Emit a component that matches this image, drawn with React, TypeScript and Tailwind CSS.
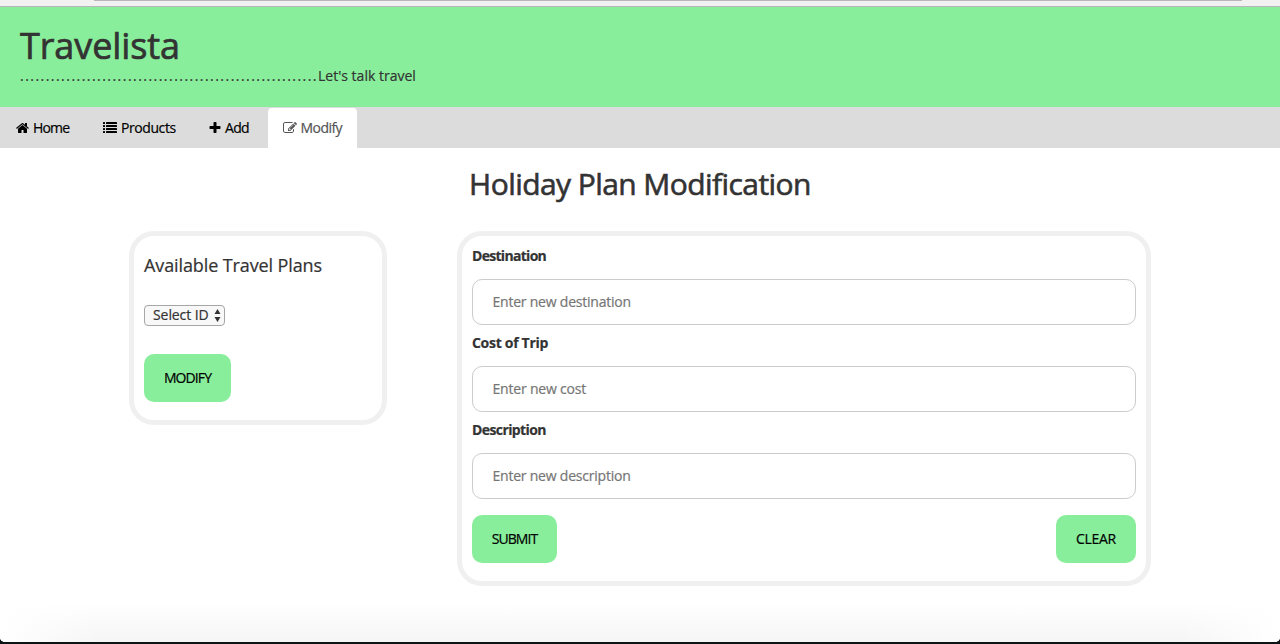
import type { ReactNode } from "react";

function Icon({ children, className }: { children: ReactNode; className: string }) {
  return (
    <svg viewBox="0 0 1792 1792" fill="currentColor" className={className} aria-hidden="true">
      {children}
    </svg>
  );
}

function Field({ label, placeholder, labelClass, inputClass }: { label: string; placeholder: string; labelClass: string; inputClass: string }) {
  return (
    <div className="h-[87px]">
      <label className={`block h-[38px] pt-[5px] text-[14px] leading-5 font-bold ${labelClass}`}>
        {label}
      </label>
      <input
        placeholder={placeholder}
        className={`block h-[46px] w-full rounded-[10px] border border-[#ccc] bg-white pr-5 pb-[2px] pl-[19.5px] text-[14px] placeholder:text-[#757575] ${inputClass}`}
      />
    </div>
  );
}

export default function App() {
  return (
    <div className="h-[644px] overflow-hidden bg-[#0b1315] font-['Open_Sans','Liberation_Sans',sans-serif] text-[14px] leading-5 text-[#333] [-webkit-text-stroke:0.2px_currentColor]">
      <div className="flex h-[642px] flex-col overflow-hidden rounded-b-[5px] bg-white">
        <div className="h-[7px] shrink-0 border-b border-[#b9b5b9] bg-[#f2f1f2]">
          <div className="mr-[38px] ml-[94px] h-px bg-[#b8b6b8]" />
        </div>
        <header className="h-[100px] shrink-0 bg-[#89ee9b] pl-5">
          <h1 className="pt-[19px] text-[36px] leading-10 font-medium [-webkit-text-stroke:0.7px_currentColor]">
            <span className="tracking-[-0.1px]">Travelista</span>
          </h1>
          <p className="flex whitespace-pre">
            <span className="tracking-[1.46px]">..........................................................</span>
            <span className="tracking-[0.01px]">Let's talk travel</span>
          </p>
        </header>
        <nav className="flex h-[41px] shrink-0 items-start bg-[#dcdcdc] pt-px text-black">
          <a className="flex h-10 w-[88px] items-center pl-[15.5px]">
            <Icon className="size-[14px]">
              <path d="M1408 992v480q0 26-19 45t-45 19h-384v-384h-256v384h-384q-26 0-45-19t-19-45v-480q0-1 .5-3t.5-3l575-474 575 474q1 2 1 6zm223-69l-62 74q-8 9-21 11h-3q-13 0-21-7l-692-577-692 577q-12 8-24 7-13-2-21-11l-62-74q-8-10-7-23.5t11-21.5l719-599q32-26 76-26t76 26l244 204v-195q0-14 9-23t23-9h192q14 0 23 9t9 23v408l219 182q10 8 11 21.5t-7 23.5z" />
            </Icon>
            <span className="ml-[3.5px] tracking-[-0.85px]">Home</span>
          </a>
          <a className="flex h-10 w-[107px] items-center pl-[15px]">
            <Icon className="size-[14px]">
              {[256, 640, 1024, 1408].map((y) => (
                <g key={y}>
                  <rect x="0" y={y - 128} width="256" height="256" rx="32" />
                  <rect x="384" y={y - 128} width="1408" height="256" rx="32" />
                </g>
              ))}
            </Icon>
            <span className="ml-1 tracking-[-0.42px]">Products</span>
          </a>
          <a className="flex h-10 w-[73px] items-center pl-[13px]">
            <Icon className="size-[14px]">
              <path d="M1600 736v192q0 40-28 68t-68 28h-416v416q0 40-28 68t-68 28h-192q-40 0-68-28t-28-68v-416h-416q-40 0-68-28t-28-68v-192q0-40 28-68t68-28h416v-416q0-40 28-68t68-28h192q40 0 68 28t28 68v416h416q40 0 68 28t28 68z" />
            </Icon>
            <span className="ml-[3px] tracking-[-0.7px]">Add</span>
          </a>
          <a className="flex h-[41px] w-[89px] items-center rounded-t-[4px] bg-white pb-px pl-[14.5px] text-[#555]">
            <Icon className="size-[14px]">
              <path d="M888 1184l116-116-152-152-116 116v56h96v96h56zm440-720q-16-16-33 1l-350 350q-17 17-1 33t33-1l350-350q17-17 1-33zm80 594v190q0 119-84.5 203.5t-203.5 84.5h-832q-119 0-203.5-84.5t-84.5-203.5v-832q0-119 84.5-203.5t203.5-84.5h832q63 0 117 25 15 7 18 23 3 17-9 29l-49 49q-14 14-32 8-23-6-45-6h-832q-66 0-113 47t-47 113v832q0 66 47 113t113 47h832q66 0 113-47t47-113v-126q0-13 9-22l64-64q15-15 35-7t20 29zm-96-738l288 288-672 672h-288v-288zm444 132l-92 92-288-288 92-92q28-28 68-28t68 28l152 152q28 28 28 68t-28 68z" />
            </Icon>
            <span className="ml-[4px] tracking-[-0.55px]">Modify</span>
          </a>
        </nav>
        <main className="h-[494px] shrink-0 bg-[linear-gradient(to_right,white,transparent_100px,transparent_1180px,white),linear-gradient(to_bottom,white_455px,#f5f5f5)]">
          <h2 className="flex h-[83px] justify-center pt-[19px] text-[30px] leading-[33px] font-medium [-webkit-text-stroke:0.6px_currentColor]">
            <span className="tracking-[-0.57px]">Holiday Plan Modification</span>
          </h2>
          <div className="flex items-start gap-[70px] pl-[129px]">
            <section className="h-[194px] w-[258px] rounded-[25px] border-5 border-[#f0f0f0] px-[10px]">
              <h4 className="pt-[19px] text-[18px] leading-5 font-medium">
                <span className="tracking-[-0.11px]">Available Travel Plans</span>
              </h4>
              <button className="mt-[30px] flex h-[21px] w-[81px] items-center rounded-[4px] border border-[#a6a6a6] bg-[#f8f8f8] pr-[3px] pl-2 leading-[18px] whitespace-nowrap">
                <span className="-mt-[2px] w-[61px] shrink-0 text-left tracking-[-0.08px]">Select ID</span>
                <svg viewBox="0 0 7 13" className="h-[13px] w-[7px] shrink-0" fill="#333">
                  <path d="M3.5 0L6.5 5H.5zM3.5 13L.5 8h6z" />
                </svg>
              </button>
              <button className="mt-[28px] flex h-12 w-[87px] items-center justify-center rounded-[10px] bg-[#89ee9b] text-black">
                <span className="tracking-[-0.9px]">MODIFY</span>
              </button>
            </section>
            <section className="h-[355px] w-[694px] rounded-[25px] border-5 border-[#f0f0f0] px-[10px] pt-[5px]">
              <Field label="Destination" placeholder="Enter new destination" labelClass="tracking-[-0.7px]" inputClass="tracking-[-0.22px]" />
              <Field label="Cost of Trip" placeholder="Enter new cost" labelClass="tracking-[-0.3px]" inputClass="tracking-[-0.2px]" />
              <Field label="Description" placeholder="Enter new description" labelClass="tracking-[-0.6px]" inputClass="tracking-[-0.22px]" />
              <div className="mt-[13px] flex justify-between text-black">
                <button className="flex h-12 w-[85px] items-center justify-center rounded-[10px] bg-[#89ee9b]">
                  <span className="tracking-[-0.95px]">SUBMIT</span>
                </button>
                <button className="flex h-12 w-[80px] items-center justify-center rounded-[10px] bg-[#89ee9b]">
                  <span className="tracking-[-0.3px]">CLEAR</span>
                </button>
              </div>
            </section>
          </div>
        </main>
      </div>
    </div>
  );
}
